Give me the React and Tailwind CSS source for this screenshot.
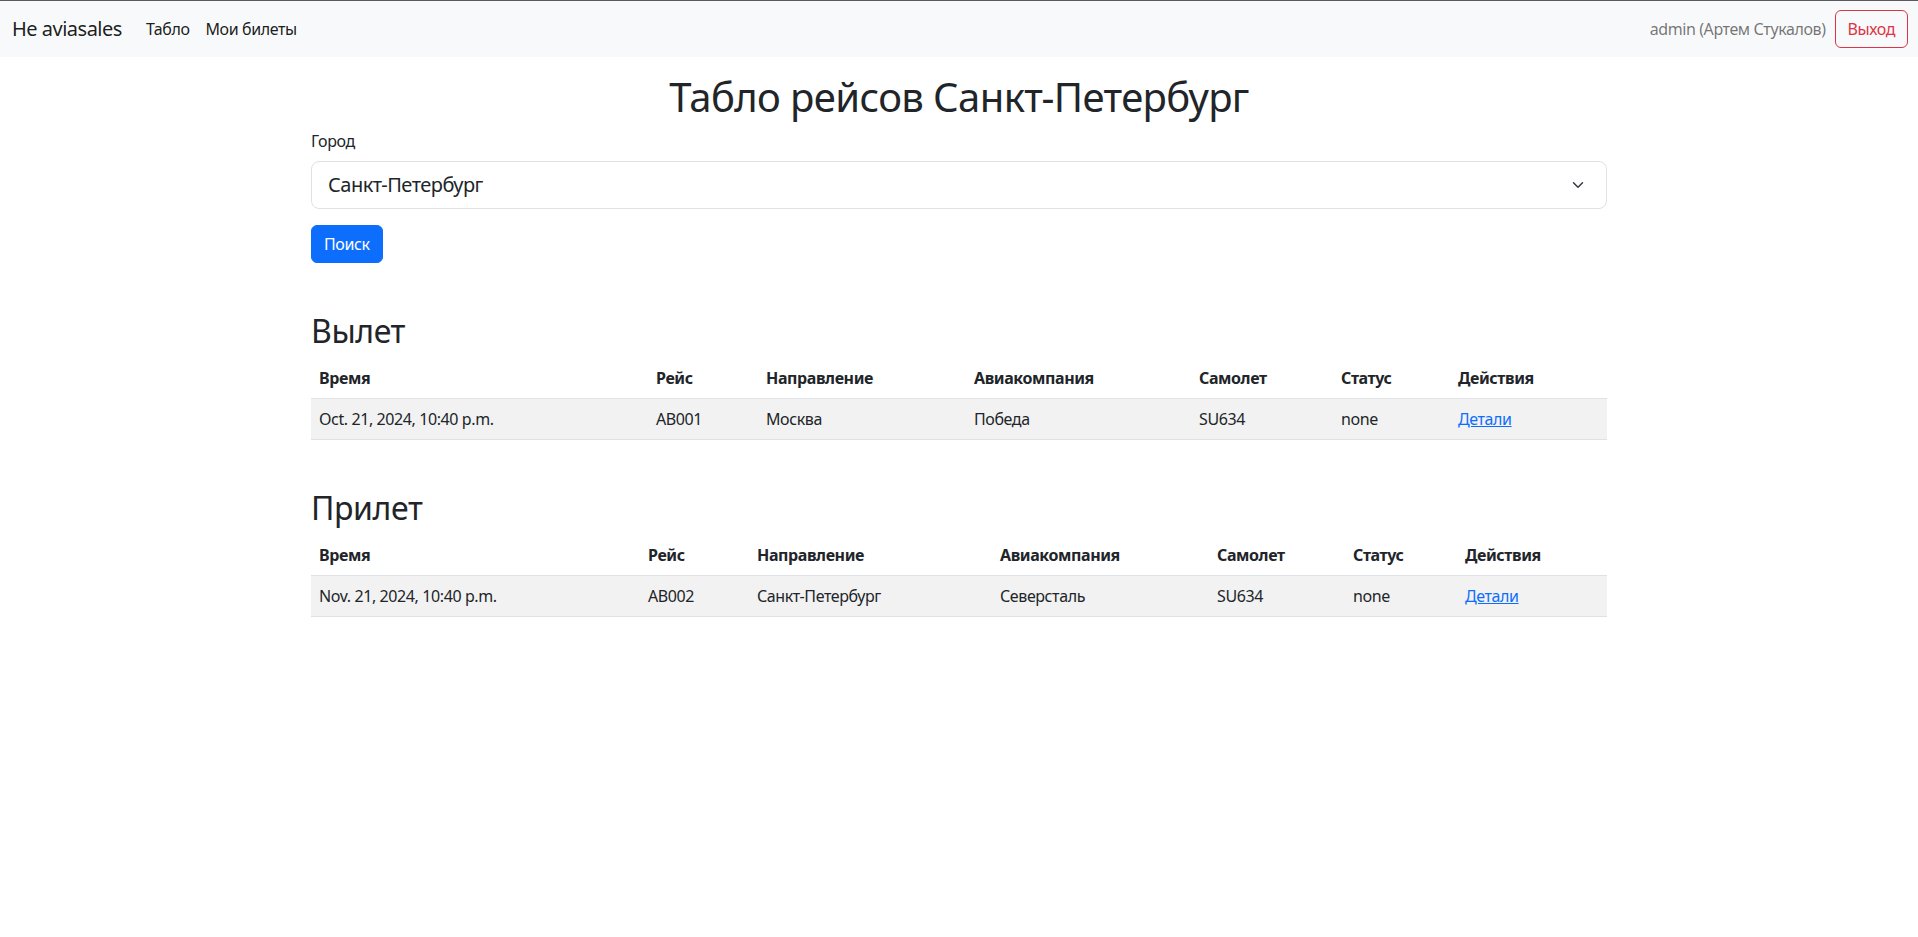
import React from "react";

const cols = ["Время", "Рейс", "Направление", "Авиакомпания", "Самолет", "Статус", "Действия"];

function FlightTable({ row, widths }) {
  return (
    <table className="w-full table-fixed border-collapse text-[16px] text-[#212529]">
      <colgroup>
        {widths.map((w, i) => (
          <col key={i} className={w} />
        ))}
      </colgroup>
      <thead>
        <tr className="border-b border-[#dee2e6]">
          {cols.map((c) => (
            <th key={c} className="text-left font-bold px-2 py-2 leading-6 whitespace-nowrap">{c}</th>
          ))}
        </tr>
      </thead>
      <tbody>
        <tr className="bg-[#f2f2f2] border-b border-[#dee2e6]">
          {row.map((v, i) => (
            <td key={i} className="px-2 py-2 leading-6 whitespace-nowrap">
              {i === 6 ? (
                <a href="#" className="text-[#0d6efd] underline">{v}</a>
              ) : (
                v
              )}
            </td>
          ))}
        </tr>
      </tbody>
    </table>
  );
}

export default function App() {
  return (
    <div className="min-h-[937px] bg-white text-[#212529] tracking-[-0.025em]" style={{ fontFamily: '"Noto Sans", "Liberation Sans", sans-serif' }}>
      <nav className="border-t border-[#5a5a5a] bg-[#f8f9fa] pl-3 pr-[10px] py-2 flex items-center justify-between">
        <div className="flex items-center">
          <a href="#" className="text-[20px] leading-[30px] py-[5px] mr-4 text-black/90 tracking-[-0.025em]">He aviasales</a>
          <a href="#" className="px-2 py-2 leading-6 text-black/90">Табло</a>
          <a href="#" className="px-2 py-2 leading-6 text-black/90">Мои билеты</a>
        </div>
        <div className="flex items-center">
          <span className="text-black/55 leading-6 mr-[9px]">admin (Артем Стукалов)</span>
          <button className="border border-[#dc3545] text-[#dc3545] rounded-[6px] px-3 py-[6px] leading-6">Выход</button>
        </div>
      </nav>

      <main className="w-[1296px] mx-auto pt-[16px]">
        <h1 className="text-[40px] leading-[48px] text-center mb-2 tracking-[-0.015em]">Табло рейсов Санкт-Петербург</h1>
        <div className="mb-4">
          <label className="block leading-6 mb-2">Город</label>
          <div className="flex items-center justify-between h-[48px] border border-[#dee2e6] rounded-[8px] pl-4 pr-4 bg-white">
            <span className="text-[20px] leading-[30px] tracking-[-0.025em]">Санкт-Петербург</span>
            <svg width="16" height="12" viewBox="0 0 16 16" className="mr-[4px]">
              <path d="m2 5 6 6 6-6" fill="none" stroke="#343a40" strokeWidth="2" strokeLinecap="round" strokeLinejoin="round" />
            </svg>
          </div>
        </div>
        <button className="bg-[#0d6efd] text-white rounded-[6px] px-3 py-[6px] leading-6 border border-[#0d6efd]">Поиск</button>

        <h2 className="text-[32px] leading-[38px] mt-12 mb-2 pt-[1px]">Вылет</h2>
        <FlightTable
          widths={["w-[337px]", "w-[110px]", "w-[208px]", "w-[225px]", "w-[142px]", "w-[117px]", "w-[157px]"]}
          row={["Oct. 21, 2024, 10:40 p.m.", "AB001", "Москва", "Победа", "SU634", "none", "Детали"]}
        />

        <h2 className="text-[32px] leading-[38px] mt-12 mb-2 pt-[1px]">Прилет</h2>
        <FlightTable
          widths={["w-[329px]", "w-[109px]", "w-[243px]", "w-[217px]", "w-[136px]", "w-[112px]", "w-[150px]"]}
          row={["Nov. 21, 2024, 10:40 p.m.", "AB002", "Санкт-Петербург", "Северсталь", "SU634", "none", "Детали"]}
        />
      </main>
    </div>
  );
}
